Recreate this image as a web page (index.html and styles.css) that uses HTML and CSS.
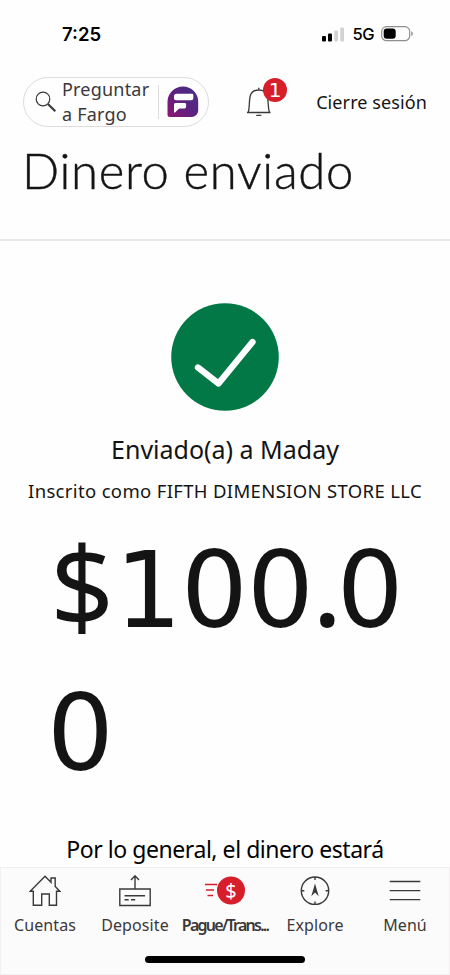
FILE: index.html
```
<!DOCTYPE html>
<html lang="es">
  <head>
    <meta charset="utf-8">
    <meta name="viewport" content="width=device-width,initial-scale=1.0">
    <title>
      Dinero enviado
    </title>
    <link rel="stylesheet" href="styles.css">
  </head>
  <body>
    <div class="status">
      <span class="time">7:25</span>
      <svg class="signal" width="23" height="15" viewBox="0 0 23 15">
        <rect x="0" y="9" width="4" height="5.5" rx="1" />
        <rect x="6" y="6.5" width="4" height="8" rx="1" />
        <rect x="12.3" y="3.5" width="3.7" height="11" rx="1" fill="#d2d2d2" />
        <rect x="18.3" y="0.5" width="3.7" height="14" rx="1" fill="#d2d2d2" />
      </svg>
      <span class="network">5G</span>
      <svg class="battery" width="33" height="16" viewBox="0 0 33 16">
        <rect x="0.7" y="0.7" width="28" height="14" rx="4.8" fill="none" stroke="#8f8f8f" stroke-width="1.2" />
        <rect x="2.7" y="2.6" width="12" height="10.2" rx="3" />
        <path d="M30.3 5.3q1.6 .8 1.6 2.4t-1.6 2.4z" fill="#8f8f8f" />
      </svg>
    </div>
    <header>
      <div class="fargo">
        <svg width="22" height="22" viewBox="0 0 22 22" fill="none" stroke="#3b3839">
          <circle cx="8" cy="8" r="6.8" stroke-width="1.2" />
          <path d="M12.9 13L20.3 20.2" stroke-width="2.2" />
        </svg>
        <span class="ask">Preguntar<br>a Fargo</span>
        <svg class="logo" width="32" height="32" viewBox="0 0 32 32">
          <defs>
            <linearGradient id="purple" x1="0" y1="1" x2="1" y2="0">
              <stop offset="0" stop-color="#8e1670" />
              <stop offset=".5" stop-color="#5b2380" />
              <stop offset="1" stop-color="#453087" />
            </linearGradient>
          </defs>
          <path fill="url(#purple)" d="M16 .5A15.3 15.3 0 0 1 31.2 16v8.5a6.5 6.5 0 0 1-6.5 6.5H3a2.500 2.500 0 0 1-2.500-2.500V16A15.500 15.500 0 0 1 16 .5z" />
          <path fill="#fff" d="M9.500 7.800h15.600q1.200 0 1.200 1.200v3.300q0 2-2 2H9q-2 0-2-2v-2q0-2.500 2.500-2.500z" />
          <path fill="#fff" d="M8.300 17h9.500q1.300 0 1.300 1.300v2.500q0 1.700-1.700 1.700h-4.400q-1 0-1.700.7l-3 3.100q-1.300 1-1.300-.5v-7.300q0-1.500 1.300-1.500z" />
        </svg>
      </div>
      <div class="alerts">
        <svg width="26" height="32" viewBox="0 0 26 32" fill="none" stroke="#3b3839" stroke-width="1.300">
          <path d="M1 26.500h23.500M2.200 26.500C3.800 22 2.800 17 4.100 10.500 5 6.500 8.500 4 12.800 4s7.700 2.500 8.600 6.500c1.300 6.500.4 11.500 2 16M12.800 1.800v2.200M10.300 29.300h5" />
        </svg>
        <span class="badge">1</span>
      </div>
      <a class="signoff">Cierre sesión</a>
    </header>
    <h1>
      Dinero enviado
    </h1>
    <main>
      <svg class="done" width="108" height="108" viewBox="0 0 108 108">
        <circle cx="54" cy="54" r="53.800" fill="#037847" />
        <path d="M27 64.500L47.500 80.500L81.500 39" fill="none" stroke="#fff" stroke-width="6.300" stroke-linecap="round" stroke-linejoin="round" />
      </svg>
      <h2>
        Enviado(a) a Maday
      </h2>
      <p class="enrolled">
        Inscrito como FIFTH DIMENSION STORE LLC
      </p>
      <p class="amount"><span class="currency">$</span><span class="whole">100</span><span class="dot">.</span>0<br>0</p>
      <p class="notice">
        Por lo general, el dinero estará
      </p>
    </main>
    <nav>
      <div class="tabs">
        <a class="tab">
          <svg width="32" height="32" viewBox="0 0 32 32">
            <path d="M4.300 16.200H1.200L16 1.300l6 6V3h4.200v8.500l4.600 4.700h-3.300v14h-7.200V19h-7.600v11.200H4.300z" />
          </svg>
          Cuentas
        </a>
        <a class="tab">
          <svg width="32" height="32" viewBox="0 0 32 32">
            <path d="M.8 14h30.400v16.500H.8zM16 14V.8M12 5l4-4.200L20 5M5.500 20.800h20.500M5.500 24.700h4.200M12 24.700h4.200" />
          </svg>
          Deposite
        </a>
        <a class="tab active">
          <svg class="pay" width="40" height="32" viewBox="0 0 40 32">
            <path d="M0 9.500h12M1 15h8M2.500 20.500h5.500" />
            <circle cx="26" cy="15.500" r="14" />
            <text x="26" y="22.500">$</text>
          </svg>
          Pague/Trans...
        </a>
        <a class="tab">
          <svg width="32" height="32" viewBox="0 0 32 32">
            <circle cx="16" cy="15.700" r="13.700" />
            <path d="M16 2v3M16 26.500v3M2.300 15.700h3M26.700 15.700h3" />
            <path class="needle" d="M16 8.500l3.700 12.800L16 17.500l-3.700 3.800z" />
          </svg>
          Explore
        </a>
        <a class="tab">
          <svg width="32" height="32" viewBox="0 0 32 32">
            <path d="M.7 6.500h30.600M.7 15.600h30.600M.7 24.600h30.600" />
          </svg>
          Menú
        </a>
      </div>
      <div class="home"></div>
    </nav>
  </body>
</html>
```
FILE: styles.css
```
html, body, p, h1, h2 {
    margin: 0;
    padding: 0;
}
body {
    display: flex;
    flex-direction: column;
    height: 975px;
    overflow: hidden;
    background-color: #fefefe;
    color: #141414;
    font-family: "Noto Sans", "Open Sans", sans-serif;
    white-space: nowrap;
}
svg {
    display: block;
    flex: none;
}
.status {
    display: flex;
    align-items: center;
    box-sizing: border-box;
    height: 68px;
    padding: 0 36px 0 62px;
    color: #000;
    font-family: Inter, sans-serif;
}
.time {
    flex: 1;
    font-size: 18.500px;
    font-weight: 600;
}
.network {
    margin: 0 7px;
    font-size: 16.500px;
    font-weight: 500;
    letter-spacing: -.5px;
}
header {
    display: flex;
    align-items: center;
    height: 50px;
    margin-top: 9px;
    padding: 0 23px;
}
.fargo {
    display: flex;
    align-items: center;
    box-sizing: border-box;
    width: 186px;
    height: 50px;
    padding-left: 11px;
    border: 1px solid #dfdadb;
    border-radius: 25px;
}
.ask {
    box-sizing: border-box;
    width: 97px;
    margin: 0 8px 0 5px;
    border-right: 1px solid #dfdadb;
    color: #3b3839;
    font-size: 18px;
    line-height: 25px;
    letter-spacing: .2px;
    height: 34px;
    display: flex;
    align-items: center;
}
.alerts {
    position: relative;
    margin-left: 37px;
}
.badge {
    position: absolute;
    top: -8px;
    left: 17px;
    width: 24px;
    height: 24px;
    border-radius: 50%;
    background-color: #d71e2b;
    color: #fff;
    font: 20px/24px "DejaVu Sans", sans-serif;
    text-align: center;
}
.signoff {
    margin-left: auto;
    font-size: 18px;
    letter-spacing: .1px;
}
h1 {
    height: 114px;
    box-sizing: border-box;
    padding-left: 22px;
    border-bottom: 2px solid #e9e9e9;
    font-family: Lato, "Noto Sans", sans-serif;
    font-size: 49px;
    font-weight: 300;
    line-height: 86px;
    letter-spacing: .7px;
    -webkit-text-stroke: .4px #141414;
}
main {
    display: flex;
    flex: 1;
    flex-direction: column;
    align-items: center;
    padding-top: 62px;
}
h2 {
    margin-top: 18px;
    font-size: 25px;
    font-weight: 400;
    line-height: 40px;
}
.enrolled {
    margin-top: 7px;
    font-size: 18.500px;
    line-height: 30px;
    letter-spacing: .34px;
}
.amount {
    align-self: stretch;
    margin-top: 14px;
    padding-left: 47px;
    font-family: "DejaVu Sans", sans-serif;
    font-size: 105px;
    line-height: 142.500px;
}
.currency {
    font-family: "Noto Sans", sans-serif;
    font-size: 112px;
    line-height: 1;
    letter-spacing: 1px;
    margin-left: 3px;
}
.whole {
    letter-spacing: -.8px;
}
.dot {
    font-family: "Noto Sans", sans-serif;
    font-weight: 500;
    letter-spacing: -5px;
    line-height: 1;
}
.notice {
    margin-top: 28px;
    color: #000;
    font-size: 23px;
    line-height: 32px;
    letter-spacing: -.45px;
}
nav {
    height: 108px;
    flex: none;
    box-sizing: border-box;
    border: 1px solid #f2f0f1;
    background-color: #fcfbfc;
}
.tabs {
    display: grid;
    grid-template-columns: repeat(5, 90px);
    margin-left: -1px;
    padding-top: 7px;
}
.tab {
    display: flex;
    flex-direction: column;
    align-items: center;
    gap: 5px;
    color: #3b3839;
    font-size: 16px;
    line-height: 26px;
    letter-spacing: .1px;
}
.tab svg {
    fill: none;
    stroke: #3b3839;
    stroke-width: 1.400;
}
.tab .needle {
    fill: #3b3839;
    stroke: none;
}
.tab .pay {
    stroke: #d71e2b;
}
.pay circle {
    fill: #d71e2b;
    stroke: none;
}
.pay text {
    fill: #fff;
    stroke: none;
    font-size: 20px;
    font-weight: 400;
    text-anchor: middle;
    letter-spacing: 0;
}
.active {
    font-weight: 600;
    letter-spacing: -1.750px;
}
.home {
    width: 160px;
    height: 7px;
    margin: 18px auto 0;
    border-radius: 4px;
    background-color: #000;
}
```
